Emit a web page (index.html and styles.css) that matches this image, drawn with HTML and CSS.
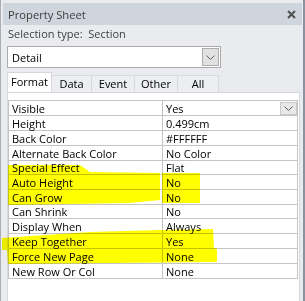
FILE: index.html
```html
<!DOCTYPE html>
<html lang="en">
<head>
  <meta charset="UTF-8" />
  <title>Property Sheet</title>
  <link rel="stylesheet" href="styles.css">
</head>
<body>
  <div class="pane">
    <div class="titlebar">
      <span>Property Sheet</span>
      <svg class="close" width="9" height="9" viewBox="0 0 9 9">
        <path d="M1 1 L8 8 M8 1 L1 8" stroke="#505050" stroke-width="2"/>
      </svg>
    </div>
    <div class="selection">Selection type:&nbsp; Section</div>
    <div class="combo">
      <span>Detail</span>
      <span class="combo-btn">
        <svg width="9" height="5" viewBox="0 0 9 5"><path d="M0.5 0.5 L4.5 4.5 L8.5 0.5" fill="none" stroke="#606060" stroke-width="1"/></svg>
      </span>
    </div>
    <div class="tabs">
      <div class="tab active w-format">Format</div>
      <div class="tab w-data">Data</div>
      <div class="tab w-event">Event</div>
      <div class="tab w-other">Other</div>
      <div class="tab w-all">All</div>
    </div>
    <div class="panel">
      <table class="grid">
        <tr>
          <td class="name">Visible</td>
          <td class="value">
            <div class="value-row">
              <span>Yes</span>
              <span class="cell-btn">
                <svg width="9" height="5" viewBox="0 0 9 5"><path d="M0.5 0.5 L4.5 4.5 L8.5 0.5" fill="none" stroke="#606060" stroke-width="1"/></svg>
              </span>
            </div>
          </td>
        </tr>
        <tr><td class="name">Height</td><td class="value">0.499cm</td></tr>
        <tr><td class="name">Back Color</td><td class="value">#FFFFFF</td></tr>
        <tr><td class="name">Alternate Back Color</td><td class="value">No Color</td></tr>
        <tr class="short"><td class="name">Special Effect</td><td class="value">Flat</td></tr>
        <tr><td class="name">Auto Height</td><td class="value">No</td></tr>
        <tr><td class="name">Can Grow</td><td class="value">No</td></tr>
        <tr class="short"><td class="name">Can Shrink</td><td class="value">No</td></tr>
        <tr><td class="name">Display When</td><td class="value">Always</td></tr>
        <tr><td class="name">Keep Together</td><td class="value">Yes</td></tr>
        <tr><td class="name">Force New Page</td><td class="value">None</td></tr>
        <tr><td class="name">New Row Or Col</td><td class="value">None</td></tr>
      </table>
    </div>
  </div>
  <!-- marker strokes drawn over the sheet -->
  <svg class="marker" width="305" height="301" viewBox="0 0 305 301">
    <polygon points="8,165 80,165 90,172 160,173 160,200 130,203 8,205" fill="#ffff00"/>
    <polygon points="162,173 200,173 200,203 162,203" fill="#ffff00"/>
    <polygon points="2,238 90,232 160,230 213,229 214,248 217,249 217,262 8,264 7,250 2,250" fill="#ffff00"/>
  </svg>
</body>
</html>
```

FILE: styles.css
```css
* {
  box-sizing: border-box;
}

body {
  margin: 0;
  position: relative;
  width: 305px;
  height: 301px;
  overflow: hidden;
  font-family: "Open Sans", "Noto Sans", sans-serif;
  font-size: 11px;
  color: #000;
  background: #e9ebef;
}

.pane {
  display: flex;
  flex-direction: column;
  width: 305px;
  height: 301px;
  padding-top: 3px;
  background: #e9ebef;
  border-left: 1px solid #a9adb4;
  border-right: 2px solid #8b93a1;
}

.titlebar {
  display: flex;
  align-items: center;
  justify-content: space-between;
  height: 22px;
  margin: 0 1px 0 2px;
  padding: 0 6px 0 5px;
  background: #cfd5dc;
  color: #3c3c3c;
  font-size: 11.2px;
}

.selection {
  height: 17px;
  line-height: 17px;
  padding-left: 7px;
  color: #404040;
}

.combo {
  display: flex;
  align-items: center;
  justify-content: space-between;
  width: 214px;
  height: 22px;
  margin: 4px 0 0 6px;
  padding: 1px 1px 1px 4px;
  background: #fff;
  border: 1px solid #ababab;
}

.combo-btn {
  display: flex;
  align-items: center;
  justify-content: center;
  width: 17px;
  height: 18px;
  background: #e1e1e1;
  border: 1px solid #adadad;
}

.tabs {
  display: flex;
  align-items: flex-end;
  height: 20px;
  margin: 4px 0 0 6px;
}

.tab {
  height: 17px;
  line-height: 16px;
  text-align: center;
  border: 1px solid #d6d8dc;
  border-bottom: none;
  border-left: none;
  background: #eceef1;
}

.tab.active {
  height: 20px;
  line-height: 18px;
  background: #fff;
  border-left: 1px solid #d6d8dc;
}

.w-format { width: 45px; }
.w-data { width: 40px; }
.w-event { width: 43px; }
.w-other { width: 43px; }
.w-all { width: 41px; }

.panel {
  flex: 1;
  width: 293px;
  margin-left: 6px;
  padding-top: 7px;
  background: #fff;
  border: 1px solid #d6d8dc;
  border-bottom: none;
}

.grid {
  width: 290px;
  border-collapse: collapse;
}

.grid td {
  height: 15px;
  padding: 0 3px;
  line-height: 13px;
  border: 1px solid #c4c4c4;
  white-space: nowrap;
}

.grid tr.short td {
  height: 14px;
}

.grid .name {
  width: 154px;
}

.value-row {
  display: flex;
  justify-content: space-between;
  align-items: center;
  margin-right: -3px;
}

.cell-btn {
  display: flex;
  align-items: center;
  justify-content: center;
  width: 17px;
  height: 13px;
  background: #e8e8e8;
  border: 1px solid #c8c8c8;
}

.marker {
  position: absolute;
  top: 0;
  left: 0;
  pointer-events: none;
  mix-blend-mode: multiply;
}
```
